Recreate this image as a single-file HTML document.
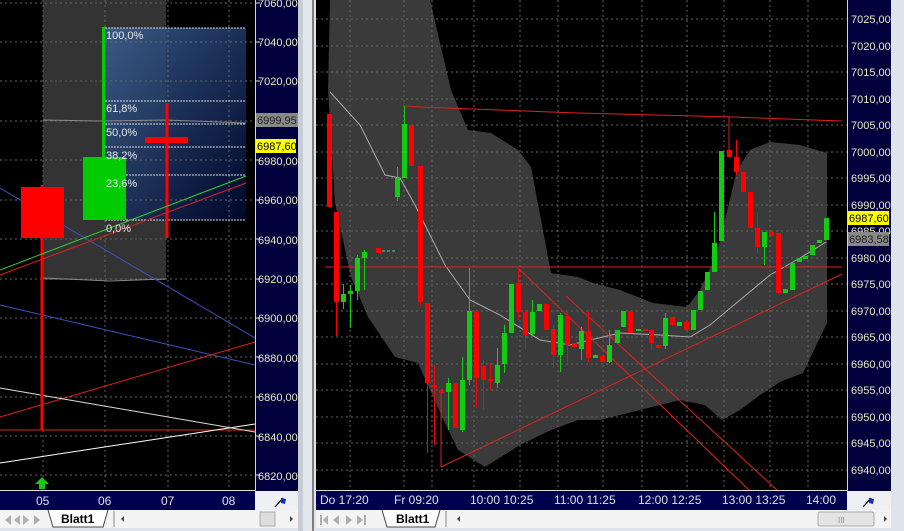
<!DOCTYPE html>
<html><head><meta charset="utf-8"><style>
html,body{margin:0;padding:0;width:904px;height:531px;overflow:hidden;background:#d4d0c8;}
svg{display:block}
text{font-family:"Liberation Sans",sans-serif;}
</style></head><body>
<svg width="904" height="531" viewBox="0 0 904 531" xmlns="http://www.w3.org/2000/svg">
<rect x="0" y="0" width="904" height="531" fill="#dfe3ea"/>
<!-- LEFT PANEL -->
<rect x="0" y="0" width="255" height="491" fill="#000"/>
<rect x="43" y="0" width="123" height="280" fill="#333"/>
<defs><linearGradient id="fib" x1="0" y1="0" x2="1" y2="1"><stop offset="0" stop-color="#3a5f8e"/><stop offset="1" stop-color="#000830"/></linearGradient></defs>
<rect x="105" y="28" width="141" height="192" fill="url(#fib)" opacity="0.9"/>
<g stroke="#666" stroke-dasharray="2,3" stroke-width="1">
<line x1="43" y1="0" x2="43" y2="491"/><line x1="105" y1="0" x2="105" y2="491"/><line x1="168" y1="0" x2="168" y2="491"/><line x1="229" y1="0" x2="229" y2="491"/>
<line x1="0" y1="3" x2="255" y2="3"/><line x1="0" y1="42" x2="255" y2="42"/><line x1="0" y1="81" x2="255" y2="81"/><line x1="0" y1="121" x2="255" y2="121"/><line x1="0" y1="160" x2="255" y2="160"/><line x1="0" y1="200" x2="255" y2="200"/><line x1="0" y1="239" x2="255" y2="239"/><line x1="0" y1="279" x2="255" y2="279"/><line x1="0" y1="318" x2="255" y2="318"/><line x1="0" y1="357" x2="255" y2="357"/><line x1="0" y1="397" x2="255" y2="397"/><line x1="0" y1="436" x2="255" y2="436"/><line x1="0" y1="475" x2="255" y2="475"/>
</g>
<g stroke="#ddd" stroke-dasharray="2,1" stroke-width="1">
<line x1="105" y1="28" x2="246" y2="28"/><line x1="105" y1="101" x2="246" y2="101"/><line x1="105" y1="124" x2="246" y2="124"/><line x1="105" y1="147" x2="246" y2="147"/><line x1="105" y1="175" x2="246" y2="175"/><line x1="105" y1="220" x2="246" y2="220"/>
</g>
<polyline points="43,120 100,121 166,120 246,123" fill="none" stroke="#888"/>
<polyline points="43,278 110,281 166,279" fill="none" stroke="#888"/>
<g stroke-width="1" fill="none">
<line x1="0" y1="188" x2="255" y2="338" stroke="#4050c0"/>
<line x1="0" y1="305" x2="255" y2="365" stroke="#4050c0"/>
<line x1="0" y1="417" x2="255" y2="342" stroke="#e02020"/>
<line x1="0" y1="430" x2="255" y2="430" stroke="#e02020"/>
<line x1="0" y1="463" x2="255" y2="424" stroke="#fff"/>
<line x1="0" y1="388" x2="255" y2="432" stroke="#ddd"/>
</g>
<rect x="40.5" y="185" width="3" height="245" fill="#f00"/>
<rect x="21" y="187" width="43" height="51" fill="#f00"/>
<rect x="102" y="27" width="3" height="130" fill="#0c0"/>
<rect x="83" y="157" width="43" height="63" fill="#0c0"/>
<rect x="165.5" y="103" width="3" height="135" fill="#f00"/>
<rect x="145" y="137" width="43" height="6" fill="#f00"/>
<g stroke-width="1" fill="none">
<line x1="0" y1="270" x2="246" y2="176" stroke="#30d030"/>
<line x1="0" y1="275" x2="246" y2="183" stroke="#e02020"/>
</g>
<g font-size="11" fill="#e8e8e8">
<text x="106" y="39">100,0%</text><text x="106" y="112">61,8%</text><text x="106" y="136">50,0%</text><text x="106" y="159">38,2%</text><text x="106" y="187">23,6%</text><text x="106" y="232">0,0%</text>
</g>
<polygon points="42,477 49,484 45,484 45,489 39,489 39,484 35,484" fill="#1c1"/>
<!-- left axis -->
<rect x="255" y="0" width="43" height="491" fill="#00003c"/>
<line x1="255.5" y1="0" x2="255.5" y2="491" stroke="#e8d890"/>
<g stroke="#e8e8c0"><path d="M256 3h4M256 42h4M256 81h4M256 121h4M256 160h4M256 200h4M256 239h4M256 279h4M256 318h4M256 357h4M256 397h4M256 436h4M256 475h4" /></g>
<g font-size="11" fill="#e8e8c0">
<text x="258" y="7">7060,00</text><text x="258" y="46">7040,00</text><text x="258" y="85">7020,00</text><text x="258" y="165">6980,00</text><text x="258" y="204">6960,00</text><text x="258" y="244">6940,00</text><text x="258" y="283">6920,00</text><text x="258" y="322">6900,00</text><text x="258" y="362">6880,00</text><text x="258" y="401">6860,00</text><text x="258" y="441">6840,00</text><text x="258" y="480">6820,00</text>
</g>
<rect x="256" y="113" width="42" height="14" fill="#888"/><text x="257" y="124" font-size="11" fill="#222">6999,95</text>
<rect x="256" y="139" width="40" height="14" fill="#ff0"/><text x="257" y="150" font-size="11" fill="#000">6987,60</text>
<rect x="298" y="0" width="5" height="531" fill="#c8ccd4"/><rect x="303" y="0" width="9" height="531" fill="#e4e8ee"/><rect x="312" y="0" width="2" height="531" fill="#808080"/>
<!-- left time axis -->
<line x1="0" y1="490.5" x2="255" y2="490.5" stroke="#ddd"/>
<rect x="0" y="491" width="255" height="19" fill="#000050"/>
<g font-size="12" fill="#e0e0e0"><text x="36" y="505">05</text><text x="98" y="505">06</text><text x="161" y="505">07</text><text x="222" y="505">08</text></g>
<rect x="255" y="491" width="43" height="19" fill="#eef0f4"/>
<path d="M275 507 L283 498" stroke="#000" stroke-width="1.3"/><path d="M281 498 l5 1 -1 5 -4 -1z" fill="#1030c0"/>
<!-- left tab bar -->
<rect x="0" y="510" width="298" height="18" fill="#f4f4f4"/>
<g fill="#b0b0b0"><path d="M5 520l6-5v10z"/><path d="M14 520l6-5v10z"/><path d="M23 515l6 5-6 5z"/><path d="M34 515l6 5-6 5z"/></g>
<path d="M48 510 l5 17 h50 l5 -17" fill="#fff" stroke="#444"/>
<text x="61" y="523" font-size="12" font-weight="bold" fill="#000">Blatt1</text>
<line x1="114" y1="511" x2="114" y2="527" stroke="#888"/>
<path d="M121 519l3-3v6z" fill="#444"/>
<rect x="260" y="512" width="15" height="14" fill="#ddd" stroke="#aaa"/>
<path d="M290 516l3 3-3 3z" fill="#444"/>
<rect x="0" y="528" width="298" height="3" fill="#dfe3ea"/>

<!-- RIGHT PANEL -->
<rect x="316" y="0" width="531" height="491" fill="#000"/>
<polygon points="330,0 430,0 451,90 468,130 491,133 518,150 531,167 551,273 578,277 593,283 620,290 653,303 687,307 700,290 717,253 737,170 750,150 770,142 800,145 827,153 827,323 803,373 780,382 760,395 740,410 722,420 705,405 680,400 640,410 600,420 578,420 551,430 520,445 485,467 458,450 445,423 418,363 395,357 368,317 351,277 335,203 328,90" fill="#3a3a3a"/>
<g stroke="#666" stroke-dasharray="2,3">
<line x1="350" y1="0" x2="350" y2="491"/><line x1="404" y1="0" x2="404" y2="491"/><line x1="432" y1="0" x2="432" y2="491"/><line x1="474" y1="0" x2="474" y2="491"/><line x1="520" y1="0" x2="520" y2="491"/><line x1="558" y1="0" x2="558" y2="491"/><line x1="603" y1="0" x2="603" y2="491"/><line x1="642" y1="0" x2="642" y2="491"/><line x1="687" y1="0" x2="687" y2="491"/><line x1="724" y1="0" x2="724" y2="491"/><line x1="770" y1="0" x2="770" y2="491"/><line x1="808" y1="0" x2="808" y2="491"/>
<line x1="316" y1="19" x2="847" y2="19"/><line x1="316" y1="46" x2="847" y2="46"/><line x1="316" y1="72" x2="847" y2="72"/><line x1="316" y1="99" x2="847" y2="99"/><line x1="316" y1="125" x2="847" y2="125"/><line x1="316" y1="152" x2="847" y2="152"/><line x1="316" y1="178" x2="847" y2="178"/><line x1="316" y1="205" x2="847" y2="205"/><line x1="316" y1="231" x2="847" y2="231"/><line x1="316" y1="258" x2="847" y2="258"/><line x1="316" y1="284" x2="847" y2="284"/><line x1="316" y1="311" x2="847" y2="311"/><line x1="316" y1="337" x2="847" y2="337"/><line x1="316" y1="364" x2="847" y2="364"/><line x1="316" y1="390" x2="847" y2="390"/><line x1="316" y1="417" x2="847" y2="417"/><line x1="316" y1="443" x2="847" y2="443"/><line x1="316" y1="470" x2="847" y2="470"/>
</g>
<polyline points="330,92 360,125 385,175 400,178 415,205 445,265 470,300 500,315 540,340 570,345 590,340 620,333 660,335 690,337 710,325 740,300 770,275 800,258 826,242" fill="none" stroke="#aaa"/>
<g stroke="#e02020" fill="none" stroke-width="1">
<polyline points="406,106 420,107 578,113 733,117 842,121"/>
<line x1="325" y1="267" x2="842" y2="267"/>
<line x1="441" y1="467" x2="842" y2="274"/>
<line x1="441" y1="390" x2="441" y2="467"/>
<line x1="518" y1="268" x2="750" y2="491"/>
<line x1="566" y1="296" x2="778" y2="491"/>
<line x1="729" y1="117" x2="729" y2="150"/>
</g>
<g fill="#f00">
<rect x="327" y="114" width="5" height="93"/>
<rect x="334" y="212" width="5" height="90"/><rect x="336" y="212" width="1" height="124"/>
<rect x="376" y="248" width="5" height="5"/>
<rect x="409" y="125" width="5" height="41"/>
<rect x="418" y="166" width="5" height="136"/><rect x="420" y="166" width="1" height="140"/>
<rect x="425" y="303" width="5" height="80"/><rect x="427" y="303" width="1" height="150"/>
<rect x="432" y="385" width="5" height="2"/><rect x="434" y="365" width="1" height="80"/>
<rect x="439" y="390" width="5" height="3"/>
<rect x="453" y="383" width="5" height="45"/>
<rect x="474" y="311" width="5" height="67"/><rect x="476" y="311" width="1" height="97"/>
<rect x="481" y="366" width="5" height="14"/><rect x="483" y="360" width="1" height="50"/>
<rect x="488" y="379" width="5" height="2"/><rect x="490" y="363" width="1" height="27"/>
<rect x="516" y="283" width="5" height="28"/><rect x="518" y="270" width="1" height="50"/>
<rect x="523" y="312" width="5" height="23"/><rect x="525" y="310" width="1" height="40"/>
<rect x="544" y="304" width="5" height="26"/>
<rect x="551" y="329" width="5" height="26"/><rect x="553" y="325" width="1" height="43"/>
<rect x="565" y="316" width="5" height="29"/><rect x="567" y="310" width="1" height="52"/>
<rect x="572" y="343" width="5" height="4"/>
<rect x="586" y="331" width="5" height="27"/><rect x="588" y="312" width="1" height="50"/>
<rect x="600" y="356" width="5" height="6"/>
<rect x="628" y="311" width="5" height="22"/>
<rect x="643" y="329" width="5" height="2"/>
<rect x="649" y="330" width="5" height="13"/><rect x="651" y="330" width="1" height="20"/>
<rect x="656" y="345" width="5" height="3"/>
<rect x="670" y="317" width="5" height="8"/>
<rect x="684" y="322" width="5" height="8"/>
<rect x="727" y="150" width="5" height="7"/>
<rect x="734" y="157" width="5" height="15"/><rect x="736" y="140" width="1" height="35"/>
<rect x="741" y="172" width="5" height="20"/>
<rect x="748" y="192" width="5" height="36"/>
<rect x="755" y="228" width="5" height="19"/><rect x="757" y="212" width="1" height="41"/>
<rect x="769" y="232" width="5" height="4"/>
<rect x="776" y="233" width="5" height="60"/>
</g>
<g fill="#1c1">
<rect x="341" y="294" width="5" height="8"/><rect x="343" y="284" width="1" height="25"/>
<rect x="348" y="291" width="5" height="3"/><rect x="350" y="285" width="1" height="43"/>
<rect x="355" y="258" width="5" height="33"/><rect x="357" y="255" width="1" height="45"/>
<rect x="362" y="252" width="5" height="6"/><rect x="364" y="250" width="1" height="40"/>
<rect x="395" y="178" width="5" height="19"/><rect x="397" y="167" width="1" height="34"/>
<rect x="402" y="124" width="5" height="54"/><rect x="404" y="106" width="1" height="20"/>
<rect x="446" y="383" width="5" height="9"/><rect x="448" y="378" width="1" height="52"/>
<rect x="460" y="380" width="5" height="50"/><rect x="462" y="357" width="1" height="75"/>
<rect x="467" y="311" width="5" height="69"/><rect x="469" y="268" width="1" height="117"/>
<rect x="495" y="365" width="5" height="18"/><rect x="497" y="348" width="1" height="40"/>
<rect x="502" y="333" width="5" height="31"/><rect x="504" y="325" width="1" height="48"/>
<rect x="509" y="284" width="5" height="49"/>
<rect x="530" y="312" width="5" height="22"/><rect x="532" y="300" width="1" height="35"/>
<rect x="537" y="304" width="5" height="7"/>
<rect x="558" y="315" width="5" height="40"/><rect x="560" y="313" width="1" height="59"/>
<rect x="579" y="331" width="5" height="18"/><rect x="581" y="327" width="1" height="33"/>
<rect x="593" y="355" width="5" height="3"/>
<rect x="607" y="345" width="5" height="17"/><rect x="609" y="330" width="1" height="33"/>
<rect x="615" y="330" width="5" height="13"/>
<rect x="621" y="311" width="5" height="16"/>
<rect x="636" y="329" width="5" height="2"/>
<rect x="663" y="318" width="5" height="28"/><rect x="665" y="313" width="1" height="36"/>
<rect x="677" y="322" width="5" height="4"/>
<rect x="691" y="310" width="5" height="20"/>
<rect x="698" y="291" width="5" height="19"/>
<rect x="705" y="272" width="5" height="18"/>
<rect x="712" y="243" width="5" height="29"/><rect x="714" y="212" width="1" height="40"/>
<rect x="719" y="151" width="5" height="90"/>
<rect x="762" y="232" width="5" height="15"/><rect x="764" y="232" width="1" height="33"/>
<rect x="783" y="289" width="5" height="4"/>
<rect x="790" y="263" width="5" height="27"/>
<rect x="797" y="258" width="5" height="4"/>
<rect x="803" y="256" width="5" height="3"/>
<rect x="810" y="245" width="5" height="10"/>
<rect x="817" y="240" width="5" height="3"/>
<rect x="824" y="218" width="5" height="22"/>
</g>
<line x1="382" y1="251" x2="396" y2="251" stroke="#4cc" stroke-dasharray="3,2"/>
<!-- right axis -->
<rect x="847" y="0" width="44" height="491" fill="#00003c"/>
<line x1="847.5" y1="0" x2="847.5" y2="491" stroke="#e8d890"/>
<g font-size="11" fill="#e8e8c0">
<text x="851" y="23">7025,00</text><text x="851" y="50">7020,00</text><text x="851" y="76">7015,00</text><text x="851" y="103">7010,00</text><text x="851" y="129">7005,00</text><text x="851" y="156">7000,00</text><text x="851" y="182">6995,00</text><text x="851" y="209">6990,00</text><text x="851" y="262">6980,00</text><text x="851" y="288">6975,00</text><text x="851" y="315">6970,00</text><text x="851" y="341">6965,00</text><text x="851" y="368">6960,00</text><text x="851" y="394">6955,00</text><text x="851" y="421">6950,00</text><text x="851" y="447">6945,00</text><text x="851" y="474">6940,00</text>
</g>
<text x="851" y="235" font-size="11" fill="#e8e8c0">6985,00</text>
<rect x="848" y="211" width="41" height="14" fill="#ff0"/><text x="849" y="222" font-size="11" fill="#000">6987,60</text>
<rect x="848" y="232" width="41" height="14" fill="#888"/><text x="849" y="243" font-size="11" fill="#222">6983,58</text>
<rect x="891" y="0" width="13" height="531" fill="#dfe3ea"/>
<!-- right time axis -->
<line x1="316" y1="490.5" x2="847" y2="490.5" stroke="#ddd"/>
<rect x="316" y="491" width="531" height="19" fill="#000050"/>
<g font-size="12" fill="#e0e0e0"><text x="320" y="504">Do  17:20</text><text x="394" y="504">Fr  09:20</text><text x="470" y="504">10:00 10:25</text><text x="554" y="504">11:00 11:25</text><text x="638" y="504">12:00 12:25</text><text x="722" y="504">13:00 13:25</text><text x="806" y="504">14:00</text></g>
<rect x="847" y="491" width="44" height="19" fill="#eef0f4"/>
<path d="M863 507 L871 498" stroke="#000" stroke-width="1.3"/><path d="M869 498 l5 1 -1 5 -4 -1z" fill="#1030c0"/>
<!-- right tab bar -->
<rect x="316" y="510" width="575" height="18" fill="#f4f4f4"/>
<g fill="#b0b0b0"><rect x="320" y="515" width="2" height="10"/><path d="M323 520l5-5v10z"/><path d="M333 520l6-5v10z"/><path d="M346 515l6 5-6 5z"/><path d="M357 515l6 5-6 5z"/><rect x="364" y="515" width="2" height="10"/></g>
<path d="M382 510 l5 17 h48 l5 -17" fill="#fff" stroke="#444"/>
<text x="396" y="523" font-size="12" font-weight="bold" fill="#000">Blatt1</text>
<line x1="446" y1="511" x2="446" y2="527" stroke="#888"/>
<path d="M457 519l3-3v6z" fill="#444"/>
<rect x="818" y="512" width="56" height="14" rx="2" fill="#e4e4e4" stroke="#aaa"/>
<text x="838" y="523" font-size="8" fill="#888">III</text>
<path d="M884 516l3 3-3 3z" fill="#444"/>
</svg>
</body></html>
